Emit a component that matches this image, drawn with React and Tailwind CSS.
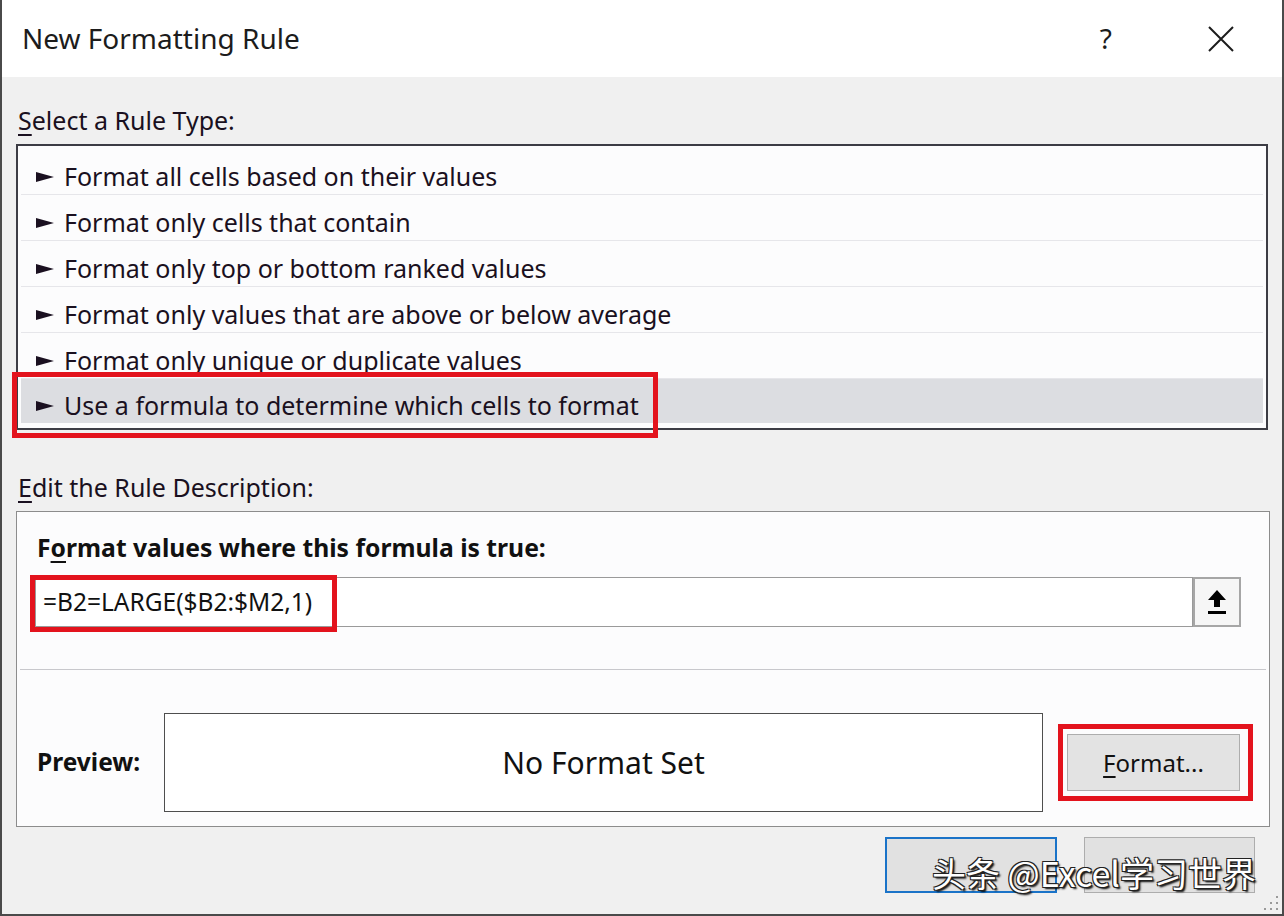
import React from "react";

const rules = [
  "Format all cells based on their values",
  "Format only cells that contain",
  "Format only top or bottom ranked values",
  "Format only values that are above or below average",
  "Format only unique or duplicate values",
  "Use a formula to determine which cells to format",
];

function Arrow() {
  return (
    <svg width="18" height="12" viewBox="0 0 18 12" className="shrink-0">
      <path d="M0 1 L18 6 L0 11 Z" fill="#1a1020" />
    </svg>
  );
}

export default function App() {
  return (
    <div className="relative w-[1284px] h-[916px] bg-[#f0f0f0] border-x-2 border-b-2 border-[#4a4a4a] flex flex-col font-['Noto_Sans',sans-serif] text-[#1a1020] overflow-hidden">
      {/* Title bar */}
      <div className="h-[77px] bg-white flex items-center pl-[20px] shrink-0">
        <div className="text-[28px] text-[#1c1c1c] leading-none -mt-[2px]">New Formatting Rule</div>
        <div className="flex-1" />
        <div className="text-[28px] text-[#1c1c1c] leading-none mr-[96px] -mt-[2px]">?</div>
        <svg width="26" height="26" viewBox="0 0 26 26" className="mr-[48px]">
          <path d="M1 1 L25 25 M25 1 L1 25" stroke="#1c1c1c" strokeWidth="2" />
        </svg>
      </div>

      <div className="px-[14px] flex flex-col">
        <div className="mt-[28px] h-[32px] flex items-center pl-[2px] text-[25px]">
          <span><span className="underline underline-offset-4">S</span>elect a Rule Type:</span>
        </div>

        {/* List */}
        <div className="mt-[7px] border-2 border-[#3c3c44] bg-[#fcfcfd] px-[3px] pt-[3px] pb-[5px] w-[1252px]">
          {rules.map((r, i) => {
            const last = i === rules.length - 1;
            return (
              <div
                key={r}
                className={
                  last
                    ? "h-[44px] bg-[#dcdde1] flex items-center pl-[15px] pt-[10px] gap-[10px] text-[25px]"
                    : "h-[46px] border-b border-[#e6e6ea] flex items-center pl-[15px] pt-[10px] gap-[10px] text-[25px]"
                }
              >
                <Arrow />
                <span>{r}</span>
              </div>
            );
          })}
        </div>

        <div className="mt-[42px] h-[32px] flex items-center pl-[2px] text-[25px]">
          <span><span className="underline underline-offset-4">E</span>dit the Rule Description:</span>
        </div>

        {/* Description panel */}
        <div className="mt-[7px] w-[1254px] h-[316px] border border-[#8c8c8c] bg-[#fcfcfd] flex flex-col">
          <div className="pt-[20px] pl-[20px] h-[32px] box-content flex items-center font-bold text-[24.7px] text-[#111]">
            <span>F<span className="underline underline-offset-4">o</span>rmat values where this formula is true:</span>
          </div>
          <div className="mt-[13px] ml-[18px] flex items-stretch h-[50px]">
            <div className="w-[1158px] border border-[#9a9a9a] bg-white flex items-center pl-[7px] text-[24.5px] text-[#111]">
              =B2=LARGE($B2:$M2,1)
            </div>
            <div className="w-[48px] border-2 border-[#a6a6a6] bg-[#f6f6f6] flex items-center justify-center">
              <svg width="22" height="28" viewBox="0 0 22 28">
                <path d="M11 2 L20 12 L14 12 L14 19 L8 19 L8 12 L2 12 Z" fill="#000" />
                <rect x="2" y="23" width="18" height="3" fill="#000" />
              </svg>
            </div>
          </div>
          <div className="mt-[42px] mx-[3px] h-px bg-[#c8c8cc]" />
          <div className="mt-[43px] flex items-center">
            <div className="w-[147px] pl-[20px] font-bold text-[24.5px] text-[#111]">Preview:</div>
            <div className="w-[879px] h-[99px] border border-[#4e4e4e] bg-white flex items-center justify-center text-[30px] text-[#111]">
              No Format Set
            </div>
            <div className="ml-[24px] w-[173px] h-[57px] border border-[#adadad] bg-[#e3e3e3] flex items-center justify-center text-[24px] text-[#111]">
              <span><span className="underline underline-offset-4">F</span>ormat...</span>
            </div>
          </div>
        </div>

        {/* Bottom buttons */}
        <div className="mt-[10px] flex justify-end pr-[13px] gap-[27px]">
          <div className="w-[172px] h-[56px] border-2 border-[#1a73c8] bg-[#e1e1e1]" />
          <div className="w-[171px] h-[56px] border border-[#adadad] bg-[#e1e1e1]" />
        </div>
      </div>

      {/* Annotation red boxes */}
      <div className="absolute left-[10px] top-[372px] w-[646px] h-[66px] border-[5px] border-[#e3131d]" />
      <div className="absolute left-[28px] top-[575px] w-[307px] h-[57px] border-[5px] border-[#e3131d]" />
      <div className="absolute left-[1056px] top-[724px] w-[195px] h-[77px] border-[5px] border-[#e3131d]" />

      {/* Watermark */}
      <div className="absolute left-[930px] top-[856px] text-[34px] leading-none text-white font-['Noto_Sans_CJK_SC',sans-serif] [text-shadow:1px_1px_0_#222,-1px_-1px_0_#222,1px_-1px_0_#222,-1px_1px_0_#222,2px_2px_2px_#000]">
        头条 @Excel学习世界
      </div>

      {/* resize grip */}
      <svg width="18" height="18" viewBox="0 0 18 18" className="absolute right-[2px] bottom-[2px]">
        {[[14, 2], [14, 8], [8, 8], [14, 14], [8, 14], [2, 14]].map(([x, y], i) => (
          <rect key={i} x={x} y={y} width="2" height="2" fill="#9a9a9a" />
        ))}
      </svg>
    </div>
  );
}
